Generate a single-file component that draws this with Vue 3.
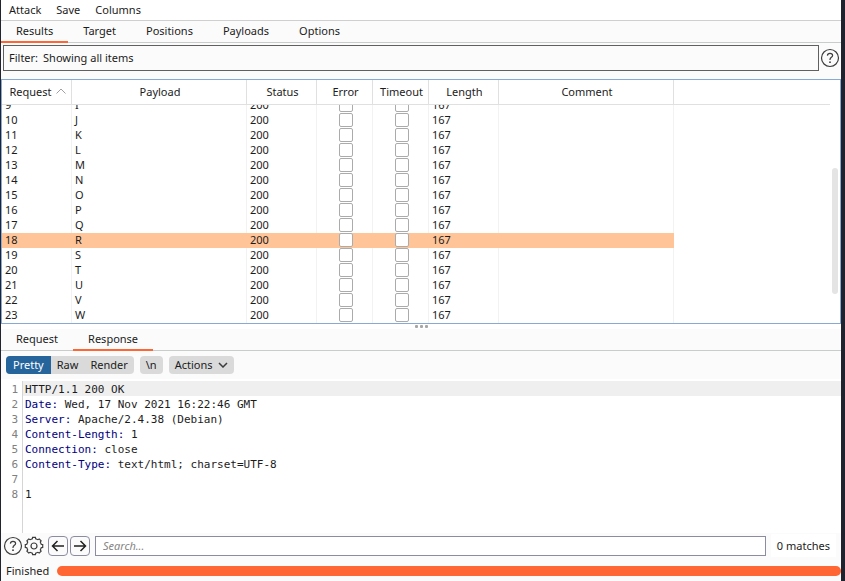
<script setup>
import { onMounted, ref } from 'vue'

const menus = ['Attack', 'Save', 'Columns']
const tabs = ['Results', 'Target', 'Positions', 'Payloads', 'Options']
const columns = ['Request', 'Payload', 'Status', 'Error', 'Timeout', 'Length', 'Comment']
const rows = Array.from('IJKLMNOPQRSTUVW', (payload, i) => ({
  id: i + 9,
  payload,
  status: 200,
  length: 167,
}))
const selected = 18
const lines = [
  { value: 'HTTP/1.1 200 OK' },
  { name: 'Date:', value: ' Wed, 17 Nov 2021 16:22:46 GMT' },
  { name: 'Server:', value: ' Apache/2.4.38 (Debian)' },
  { name: 'Content-Length:', value: ' 1' },
  { name: 'Connection:', value: ' close' },
  { name: 'Content-Type:', value: ' text/html; charset=UTF-8' },
  { value: '' },
  { value: '1' },
]
const search = ref('')
const scroller = ref(null)

// Keep the last result in view.
onMounted(() => {
  scroller.value.scrollTop = scroller.value.scrollHeight
})
</script>

<template>
  <main class="window">
    <nav class="menubar">
      <button v-for="m in menus" :key="m" type="button">{{ m }}</button>
    </nav>
    <nav class="tabs">
      <button v-for="(t, i) in tabs" :key="t" type="button" :class="{ active: i === 0 }">{{ t }}</button>
    </nav>

    <div class="filter-row">
      <button class="filter" type="button"><span>Filter:</span><span>Showing all items</span></button>
      <button class="icon" type="button" aria-label="Help">
        <svg width="20" height="20" viewBox="0 0 20 20">
          <circle cx="10" cy="10" r="8.5" />
          <path d="M7.4 7.6C7.5 6 8.6 5.3 10 5.3s2.6.8 2.6 2.1c0 1.9-2.6 2-2.6 4.1v.5" />
          <circle class="dot" cx="10" cy="14.2" r="0.9" />
        </svg>
      </button>
    </div>

    <section class="results">
      <div ref="scroller" class="scroller">
        <table>
          <colgroup>
            <col class="c70" /><col class="c175" /><col class="c70" /><col class="c56" />
            <col class="c56" /><col class="c70" /><col class="c175" /><col />
          </colgroup>
          <thead>
            <tr>
              <th v-for="(c, i) in columns" :key="c" scope="col">
                <span>{{ c }}<svg v-if="i === 0" class="sort" width="10" height="6" viewBox="0 0 10 6"><path d="M.5 5.5 5 1l4.500 4.500" /></svg></span>
              </th>
              <td></td>
            </tr>
          </thead>
          <tbody>
            <tr v-for="r in rows" :key="r.id" :class="{ selected: r.id === selected }">
              <td>{{ r.id }}</td>
              <td>{{ r.payload }}</td>
              <td>{{ r.status }}</td>
              <td class="check"><input type="checkbox" aria-label="Error" /></td>
              <td class="check"><input type="checkbox" aria-label="Timeout" /></td>
              <td>{{ r.length }}</td>
              <td></td>
              <td></td>
            </tr>
          </tbody>
        </table>
      </div>
      <div class="thumb"></div>
    </section>

    <div class="splitter"><i></i><i></i><i></i></div>

    <nav class="tabs">
      <button type="button">Request</button>
      <button type="button" class="active">Response</button>
    </nav>

    <div class="toolbar">
      <div class="pill">
        <button type="button" class="on">Pretty</button>
        <button type="button">Raw</button>
        <button type="button">Render</button>
      </div>
      <div class="pill"><button type="button">\n</button></div>
      <div class="pill">
        <button type="button">Actions<svg width="10" height="6" viewBox="0 0 10 6"><path d="M1 1l4 4 4-4" /></svg></button>
      </div>
    </div>

    <section class="editor">
      <div v-for="(l, i) in lines" :key="i" class="line" :class="{ current: i === 0 }">
        <span class="num">{{ i + 1 }}</span>
        <code><span v-if="l.name" class="name">{{ l.name }}</span>{{ l.value }}</code>
      </div>
      <div class="line rest"><span class="num"></span><code></code></div>
    </section>

    <div class="searchbar">
      <button class="icon" type="button" aria-label="Search help">
        <svg width="20" height="20" viewBox="0 0 20 20">
          <circle cx="10" cy="10" r="8.5" />
          <path d="M7.4 7.600C7.500 6 8.600 5.300 10 5.300s2.600.8 2.600 2.100c0 1.900-2.600 2-2.600 4.100v.5" />
          <circle class="dot" cx="10" cy="14.200" r="0.9" />
        </svg>
      </button>
      <button class="icon" type="button" aria-label="Settings">
        <svg width="20" height="20" viewBox="-10 -10 20 20">
          <path d="M-1.700-7.200-1.400-8.700H1.400L1.700-7.200 3.900-6.300 5.200-7.100 7.100-5.200 6.300-3.900 7.200-1.700 8.700-1.400V1.400L7.200 1.700 6.300 3.900 7.100 5.200 5.200 7.100 3.900 6.300 1.700 7.200 1.400 8.700H-1.400L-1.700 7.200-3.900 6.300-5.200 7.100-7.100 5.200-6.300 3.900-7.200 1.700-8.700 1.400V-1.400L-7.200-1.700-6.300-3.900-7.100-5.200-5.200-7.100-3.900-6.300Z" />
          <circle r="3" />
        </svg>
      </button>
      <button class="arrow" type="button" aria-label="Previous match">
        <svg width="14" height="12" viewBox="0 0 14 12"><path d="M13 6H2M6.500 1 1.500 6l5 5" /></svg>
      </button>
      <button class="arrow" type="button" aria-label="Next match">
        <svg width="14" height="12" viewBox="0 0 14 12"><path d="M1 6h11M7.500 1l5 5-5 5" /></svg>
      </button>
      <input v-model="search" type="text" placeholder="Search..." aria-label="Search" />
      <span class="matches">0 matches</span>
    </div>

    <footer class="status">
      <span>Finished</span>
      <div class="bar"></div>
    </footer>
  </main>
</template>

<style>
body {
  margin: 0;
  background: #fbfbfb;
}
</style>

<style scoped>
.window {
  box-sizing: border-box;
  min-height: 100vh;
  display: flex;
  flex-direction: column;
  border-left: 1px solid #23232f;
  border-right: 4px solid #20222d;
  background: #fbfbfb;
  color: #1c1c1c;
  font: 11px/15px "Noto Sans", sans-serif;
}
button {
  margin: 0;
  padding: 0;
  border: 0;
  background: none;
  color: inherit;
  font: inherit;
}
svg {
  display: block;
  fill: none;
  stroke: #3c3c3c;
}
.menubar {
  display: flex;
  gap: 15px;
  height: 20px;
  padding-left: 8px;
  background: #fff;
  border-bottom: 1px solid #cfcfcf;
}
.menubar button {
  padding-bottom: 2px;
}
.tabs {
  display: flex;
  height: 21px;
  border-bottom: 1px solid #c8cccb;
}
.tabs button {
  height: 22px;
  padding: 0 15px 2px;
  border-bottom: 2px solid transparent;
}
.tabs .active {
  border-bottom-color: #ff6633;
}
.filter-row {
  display: flex;
  align-items: center;
  gap: 1px;
  padding: 2px 1px 8px 2px;
}
.filter {
  flex: 1;
  display: flex;
  align-items: center;
  gap: 5px;
  height: 26px;
  padding: 0 5px 2px;
  border: 1px solid #606060;
}
.icon {
  width: 20px;
  height: 20px;
}
.icon svg {
  stroke-width: 1.2;
}
.dot {
  fill: #3c3c3c;
  stroke: none;
}
.results {
  position: relative;
  border: 1px solid #86aad2;
  background: #fff;
}
.scroller {
  height: 243px;
  overflow: hidden;
  padding-right: 10px;
}
table {
  width: 100%;
  table-layout: fixed;
  border-collapse: separate;
  border-spacing: 0;
}
.c70 { width: 70px; }
.c175 { width: 175px; }
.c56 { width: 56px; }
thead th,
thead td {
  position: sticky;
  top: 0;
  z-index: 1;
  height: 24px;
  padding: 0;
  background: #fff;
  border-bottom: 1px solid #e0e0e0;
  font-weight: 400;
}
thead th {
  border-right: 1px solid #e0e0e0;
}
th span {
  display: flex;
  align-items: center;
  justify-content: center;
  gap: 4px;
  padding: 0 0 2px 2px;
}
.sort {
  stroke: #a0a0a0;
}
tbody td {
  height: 15px;
  padding: 0 0 0 3px;
  border-right: 1px solid #f2f2f2;
  line-height: 13px;
  vertical-align: top;
}
tbody td:last-child {
  border-right: 0;
}
.selected td:not(:last-child) {
  background: #ffc599;
  border-right-color: #ffc599;
}
tbody .check {
  padding: 0 0 0 2px;
}
.check input {
  appearance: none;
  display: block;
  box-sizing: border-box;
  width: 14px;
  height: 14px;
  margin: 0 auto 1px;
  border: 1px solid #ababab;
  border-radius: 2px;
  background: #fff;
}
.thumb {
  position: absolute;
  right: 2px;
  top: 88px;
  width: 6px;
  height: 126px;
  border-radius: 3px;
  background: #e4e4e4;
}
.splitter {
  display: flex;
  justify-content: center;
  gap: 2px;
  height: 4px;
  padding-top: 1px;
  background: #fff;
}
.splitter i {
  width: 3px;
  height: 3px;
  border-radius: 1px;
  background: #a6a6a6;
}
.toolbar {
  display: flex;
  gap: 6px;
  padding: 5px;
}
.pill {
  display: flex;
  height: 18px;
  border-radius: 4px;
  overflow: hidden;
  background: #dadada;
}
.pill button {
  display: flex;
  align-items: center;
  gap: 5px;
  padding: 0 6px 1px;
}
.pill svg {
  stroke-width: 1.5;
}
.pill .on {
  padding: 0 7px 1px;
  background: #26649c;
  color: #fff;
}
.editor {
  flex: 1;
  display: flex;
  flex-direction: column;
  padding-top: 2px;
  background: #fff;
}
.line {
  display: flex;
  height: 15px;
}
.rest {
  flex: 1;
}
.line .num,
.line code {
  font: 11px/17px "DejaVu Sans Mono", monospace;
}
.line .num {
  width: 17px;
  padding-right: 4px;
  border-right: 1px solid #d5d5d5;
  text-align: right;
  color: #808080;
}
.line code {
  flex: 1;
  padding-left: 2px;
  white-space: pre;
}
.current code {
  background: #efefef;
}
.name {
  color: #000080;
}
.searchbar {
  display: flex;
  align-items: center;
  padding: 1px 5px 1px 2px;
}
.searchbar .icon {
  margin-right: 1px;
}
.arrow {
  display: flex;
  align-items: center;
  justify-content: center;
  box-sizing: border-box;
  width: 20px;
  height: 20px;
  margin-left: 2px;
  border: 1px solid #8c8ca0;
  border-radius: 4px;
}
.icon + .arrow {
  margin-left: 3px;
}
.arrow svg {
  stroke: #222;
  stroke-width: 1.5;
}
.searchbar input {
  flex: 1;
  min-width: 0;
  box-sizing: border-box;
  height: 20px;
  margin-left: 5px;
  padding: 0 7px;
  border: 1px solid #8c8ca0;
  border-radius: 0;
  background: #fff;
  font: inherit;
}
.searchbar input::placeholder {
  color: #858585;
  font-style: italic;
}
.matches {
  margin-left: 5px;
  padding: 4px 6px;
  background: #fff;
}
.status {
  display: flex;
  align-items: center;
  gap: 8px;
  height: 15px;
  padding: 5px 0 3px 5px;
}
.bar {
  flex: 1;
  height: 10px;
  border-radius: 5px;
  background: #ff6633;
}
</style>
